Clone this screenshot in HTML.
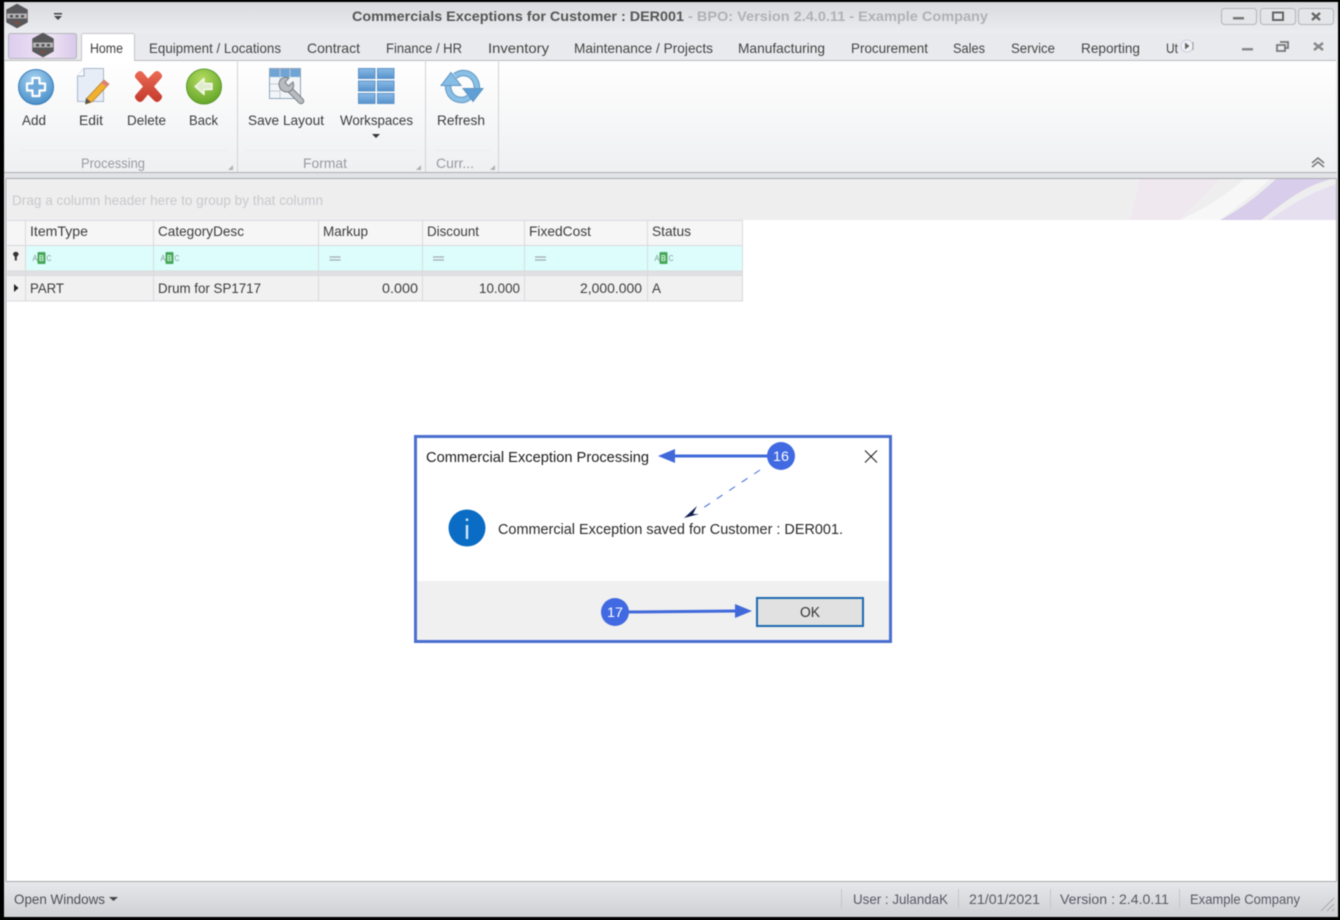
<!DOCTYPE html>
<html><head><meta charset="utf-8"><style>
html,body{margin:0;padding:0;background:#000;width:1340px;height:920px;overflow:hidden}
svg{display:block;filter:blur(.5px)}
text{font-family:"Liberation Sans",sans-serif;font-size:14px;fill:#444}
.g{fill:#9a9a9e}.h{fill:#3c3c3c}
.t{font-size:8px;fill:#7f9a94}.b{font-size:8px;fill:#d8f0dc;font-weight:bold}
</style></head><body>
<svg width="1340" height="920" viewBox="0 0 1340 920" xmlns="http://www.w3.org/2000/svg">
<defs>
<linearGradient id="tb" x1="0" y1="0" x2="0" y2="1"><stop offset="0" stop-color="#d9dadd"/><stop offset="1" stop-color="#ecedf0"/></linearGradient>
<linearGradient id="rb" x1="0" y1="0" x2="0" y2="1"><stop offset="0" stop-color="#fff"/><stop offset="1" stop-color="#eff0f2"/></linearGradient>
<linearGradient id="sb" x1="0" y1="0" x2="0" y2="1"><stop offset="0" stop-color="#e6e7ea"/><stop offset="1" stop-color="#cfd0d4"/></linearGradient>
<linearGradient id="app" x1="0" y1="0" x2="1" y2="0"><stop offset="0" stop-color="#dccdf0"/><stop offset=".6" stop-color="#efe4f4"/><stop offset="1" stop-color="#d8c8ea"/></linearGradient>
<radialGradient id="bl" cx=".45" cy=".3" r=".8"><stop offset="0" stop-color="#a8d4f2"/><stop offset="1" stop-color="#3d86c4"/></radialGradient>
<radialGradient id="gr" cx=".45" cy=".3" r=".8"><stop offset="0" stop-color="#b4dc60"/><stop offset="1" stop-color="#5a9e22"/></radialGradient>
<linearGradient id="rd" x1="0" y1="0" x2="0" y2="1"><stop offset="0" stop-color="#ea6a55"/><stop offset="1" stop-color="#c43a2c"/></linearGradient>
<linearGradient id="cell" x1="0" y1="0" x2="0" y2="1"><stop offset="0" stop-color="#8abae6"/><stop offset="1" stop-color="#5692cc"/></linearGradient>
<g id="abc"><rect x="6" y="0" width="8" height="12" rx="1" fill="#46a85a"/><text x="1" y="9" class="t" textLength="5" lengthAdjust="spacingAndGlyphs">A</text><text x="7.500" y="9" class="b" textLength="5" lengthAdjust="spacingAndGlyphs">B</text><text x="15" y="9" class="t" textLength="5" lengthAdjust="spacingAndGlyphs">C</text></g>
<g id="eq"><path d="M0 0h11M0 3h11" stroke="#a4acae" stroke-width="1.200"/></g>
<g id="hex"><path d="M0-11.500 10-6V6L0 11.500-10 6V-6Z" fill="#58585a" stroke="#58585a" stroke-width="1.500" stroke-linejoin="round"/><path d="M-10-2.500H10V2.500H-10Z" fill="#b4b4b6"/><path d="M-7-1h3v2.500h-3zM-1.500-1h3v2.500h-3zM4-1h3v2.500h-3z" fill="#555"/><path d="M-3 6h6l-3 3z" fill="#8c4a3c"/></g>
</defs>

<!-- window -->
<rect x="4" y="2" width="1334" height="915" fill="#e6e7ea"/>
<rect x="4" y="2" width="1334" height="31" fill="url(#tb)"/>
<rect x="4" y="33" width="1334" height="27" fill="#e9eaed"/>

<!-- qat -->
<use href="#hex" transform="translate(17,16)"/>
<path d="M54 13h8v1.500h-8zM54 16h8l-4 4z" fill="#444"/>

<!-- title -->
<text x="352" y="21" textLength="332" style="font-weight:bold;fill:#555" lengthAdjust="spacingAndGlyphs">Commercials Exceptions for Customer : DER001</text>
<text x="688" y="21" textLength="300" style="font-weight:bold;fill:#b0b1b4" lengthAdjust="spacingAndGlyphs">- BPO: Version 2.4.0.11 - Example Company</text>

<!-- window buttons -->
<g fill="#e4e5e8" stroke="#b4b5b9">
<rect x="1221.500" y="8.500" width="35" height="16" rx="3"/><rect x="1260.500" y="8.500" width="35" height="16" rx="3"/><rect x="1298.500" y="8.500" width="35" height="16" rx="3"/>
</g>
<rect x="1233" y="17" width="11" height="2.500" fill="#777"/>
<rect x="1273" y="12.500" width="10" height="7.500" fill="none" stroke="#666" stroke-width="2"/>
<path d="M1312 13l8 7M1320 13l-8 7" stroke="#666" stroke-width="2.400"/>

<!-- app button -->
<rect x="8.500" y="33.500" width="68" height="25" rx="2" fill="url(#app)" stroke="#b5b5bb"/>
<use href="#hex" transform="translate(43,45)"/>

<!-- ribbon -->
<rect x="5" y="60" width="1331" height="112" fill="url(#rb)" stroke="none"/>
<path d="M4.500 60.500H81M134 60.500H1336" stroke="#bcbdc1" fill="none"/>
<rect x="81.500" y="33.500" width="53" height="28" rx="2" fill="#fff" stroke="#c4c5c9"/>
<rect x="82" y="58" width="52" height="5" fill="#fff"/>

<!-- tabs -->
<text x="90" y="53" textLength="33" class="h" lengthAdjust="spacingAndGlyphs">Home</text>
<g style="fill:#555">
<text x="149" y="53" textLength="132" lengthAdjust="spacingAndGlyphs">Equipment / Locations</text>
<text x="307" y="53" textLength="53" lengthAdjust="spacingAndGlyphs">Contract</text>
<text x="386" y="53" textLength="76" lengthAdjust="spacingAndGlyphs">Finance / HR</text>
<text x="488" y="53" textLength="61" lengthAdjust="spacingAndGlyphs">Inventory</text>
<text x="574" y="53" textLength="139" lengthAdjust="spacingAndGlyphs">Maintenance / Projects</text>
<text x="738" y="53" textLength="87" lengthAdjust="spacingAndGlyphs">Manufacturing</text>
<text x="851" y="53" textLength="77" lengthAdjust="spacingAndGlyphs">Procurement</text>
<text x="953" y="53" textLength="32" lengthAdjust="spacingAndGlyphs">Sales</text>
<text x="1011" y="53" textLength="44" lengthAdjust="spacingAndGlyphs">Service</text>
<text x="1081" y="53" textLength="59" lengthAdjust="spacingAndGlyphs">Reporting</text>
<text x="1166" y="53" textLength="12" lengthAdjust="spacingAndGlyphs">Ut</text>
</g>
<circle cx="1187" cy="46" r="6" fill="#f1f2f6" stroke="#c9cce0"/>
<path d="M1185 42.500l4.500 3.500-4.500 3.500z" fill="#666"/>
<path d="M1193 42v8" stroke="#999"/>
<rect x="1242" y="48" width="11" height="2.500" fill="#888"/>
<path d="M1280 42h8v6h-3M1277 45h8v6h-8z" fill="none" stroke="#777" stroke-width="1.800"/>
<path d="M1314 43l9 7M1323 43l-9 7" stroke="#888" stroke-width="2.400"/>

<!-- ribbon separators -->
<path d="M237.500 60v112M425.500 60v112M498.500 60v112" stroke="#d2d3d6"/>
<path d="M20 150.500H228M246 150.500H416M434 150.500H490" stroke="#ececee"/>
<g fill="#b0b0b2"><path d="M233 165v5h-5zM421 165v5h-5zM495 165v5h-5z"/></g>

<!-- Add -->
<circle cx="36" cy="87" r="17.500" fill="url(#bl)" stroke="#3a7cb8"/>
<path d="M32.500 78h7v5.500H45v7h-5.500V96h-7v-5.500H27v-7h5.500z" fill="#6ea8da" stroke="#fff" stroke-width="2.200" stroke-linejoin="round"/>
<!-- Edit -->
<path d="M84 68.500h19.500v33h-26V76z" fill="#e6edf6" stroke="#a8b6cc"/>
<path d="M84 68.500V76h-7" fill="#fbfcfe" stroke="#a8b6cc"/>
<path d="M104 80l5 4-17 18-6 2 1-6z" fill="#f0b030" stroke="#b07820" stroke-width=".7"/>
<path d="M104 80l5 4-2.500 3-5-4z" fill="#e08080"/>
<path d="M85 104l1-6 5 4z" fill="#555"/>
<!-- Delete -->
<path d="M137 72.500c2-2 4-2 6 0l5 6 6-6c2-2 4-2 6 0s3 4 1 6l-7 8 7 8c2 2 1 4-1 6s-4 2-6 0l-6-6-5 6c-2 2-4 2-6 0s-3-4-1-6l7-8-7-8c-2-2-1-4 1-6z" fill="url(#rd)"/>
<!-- Back -->
<circle cx="204" cy="86.500" r="17.500" fill="url(#gr)" stroke="#5a9a28"/>
<path d="M195 86.500l9-8v5h8v6h-8v5z" fill="#dfeccb" stroke="#f7f7ef" stroke-width="1.400" stroke-linejoin="round"/>
<!-- labels -->
<text x="22" y="125" textLength="24" class="h" lengthAdjust="spacingAndGlyphs">Add</text>
<text x="79" y="125" textLength="24" class="h" lengthAdjust="spacingAndGlyphs">Edit</text>
<text x="127" y="125" textLength="39" class="h" lengthAdjust="spacingAndGlyphs">Delete</text>
<text x="189" y="125" textLength="29" class="h" lengthAdjust="spacingAndGlyphs">Back</text>
<text x="248" y="125" textLength="76" class="h" lengthAdjust="spacingAndGlyphs">Save Layout</text>
<text x="340" y="125" textLength="73" class="h" lengthAdjust="spacingAndGlyphs">Workspaces</text>
<text x="437" y="125" textLength="48" class="h" lengthAdjust="spacingAndGlyphs">Refresh</text>
<path d="M372 134h8l-4 4z" fill="#333"/>
<text x="81" y="168" textLength="64" class="g" lengthAdjust="spacingAndGlyphs">Processing</text>
<text x="303" y="168" textLength="44" class="g" lengthAdjust="spacingAndGlyphs">Format</text>
<text x="436" y="168" textLength="38" class="g" lengthAdjust="spacingAndGlyphs">Curr...</text>

<!-- Save layout icon -->
<rect x="269.500" y="68.500" width="31" height="30" fill="#f2f5f8" stroke="#8ea4ba"/>
<rect x="270" y="69" width="30" height="8" fill="#6fa4d4"/>
<path d="M280 69v29M290 69v8M270 84h12M270 91h10" stroke="#c0ccd8" fill="none"/>
<path d="M290 90l11 11" stroke="#777d84" stroke-width="6.500" stroke-linecap="round"/>
<path d="M290 90l11 11" stroke="#b8bcc0" stroke-width="4.500" stroke-linecap="round"/>
<path d="M279 84c0-5 5-8 10-6l-4 4.500 3.500 3.500 4.500-4c2 5-1 10-6 10-4 0-8-3-8-8z" fill="#b8bcc0" stroke="#777d84"/>
<!-- workspaces icon -->
<g fill="url(#cell)" stroke="#5f94c8" stroke-width="1">
<rect x="358.500" y="68.500" width="16.500" height="10"/><rect x="377.500" y="68.500" width="16.500" height="10"/>
<rect x="358.500" y="81" width="16.500" height="10"/><rect x="377.500" y="81" width="16.500" height="10"/>
<rect x="358.500" y="93.500" width="16.500" height="10"/><rect x="377.500" y="93.500" width="16.500" height="10"/>
</g>
<!-- refresh icon -->
<path d="M448 85c0 10 6 15 14 15 3 0 5-1 7-3" fill="none" stroke="#5f96c0" stroke-width="6.500"/>
<path d="M448 85c0 10 6 15 14 15 3 0 5-1 7-3" fill="none" stroke="#8ac0e6" stroke-width="4.500"/>
<path d="M477 89c0-10-6-16-14-16-3 0-5 1-8 3" fill="none" stroke="#5f96c0" stroke-width="6.500"/>
<path d="M477 89c0-10-6-16-14-16-3 0-5 1-8 3" fill="none" stroke="#8ac0e6" stroke-width="4.500"/>
<path d="M451 72.500l10 13h-20z" fill="#86bde6" stroke="#5f96c0"/>
<path d="M473 101.500l-10-13h20z" fill="#5f9fd6" stroke="#5f96c0"/>
<!-- collapse -->
<path d="M1312 163l6-5 6 5M1312 167l6-5 6 5" fill="none" stroke="#777" stroke-width="1.500"/>

<!-- content -->
<rect x="4" y="172" width="1334" height="6" fill="#e2e3e6"/>
<path d="M4 172.500H1337" stroke="#b0b1b5"/>
<rect x="6" y="178.500" width="1330.500" height="703" fill="#fff" stroke="#a8a9ad"/>
<rect x="7" y="179" width="1329" height="41" fill="#eeeeef"/>
<path d="M1140 179h80l-40 41h-50z" fill="#f0e6ef" opacity=".8"/>
<path d="M1180 220c30-14 50-28 64-41h26c-16 16-36 30-50 41z" fill="#f7f7f8"/>
<path d="M1220 220c20-10 40-26 56-41h55c-30 8-50 26-70 41z" fill="#d8cdea"/>
<path d="M1268 220c20-12 34-24 68-36v36z" fill="#e6dff0"/>
<text x="12" y="205" textLength="311" style="fill:#c8c9cb" lengthAdjust="spacingAndGlyphs">Drag a column header here to group by that column</text>

<!-- grid -->
<rect x="7" y="220" width="736" height="25" fill="#f6f6f7"/>
<rect x="7" y="245" width="736" height="26" fill="#dcfdfc"/>
<rect x="7" y="245" width="19" height="26" fill="#f2f2f3"/>
<rect x="7" y="271" width="736" height="4" fill="#e1e1e3"/>
<rect x="7" y="275" width="736" height="26" fill="#f1f1f2"/>
<rect x="7" y="275" width="19" height="26" fill="#f2f2f3"/>
<path d="M7 220.500H743M7 245.500H743M7 271H743M7 275.500H743M7 301H743" stroke="#d9dade" stroke-width="1"/>
<path d="M25.500 220v81M153.500 220v81M318.500 220v81M422.500 220v81M524.500 220v81M647.500 220v81M742.500 220v81" stroke="#d9dade"/>
<text x="30" y="236" textLength="58" lengthAdjust="spacingAndGlyphs" class="h">ItemType</text>
<text x="158" y="236" textLength="86" lengthAdjust="spacingAndGlyphs" class="h">CategoryDesc</text>
<text x="323" y="236" textLength="45" lengthAdjust="spacingAndGlyphs" class="h">Markup</text>
<text x="427" y="236" textLength="52" lengthAdjust="spacingAndGlyphs" class="h">Discount</text>
<text x="529" y="236" textLength="62" lengthAdjust="spacingAndGlyphs" class="h">FixedCost</text>
<text x="652" y="236" textLength="39" lengthAdjust="spacingAndGlyphs" class="h">Status</text>
<text x="30" y="293" textLength="34" lengthAdjust="spacingAndGlyphs" class="h">PART</text>
<text x="158" y="293" textLength="103" lengthAdjust="spacingAndGlyphs" class="h">Drum for SP1717</text>
<text x="382" y="293" textLength="36" lengthAdjust="spacingAndGlyphs" class="h">0.000</text>
<text x="479" y="293" textLength="41" lengthAdjust="spacingAndGlyphs" class="h">10.000</text>
<text x="580" y="293" textLength="62" lengthAdjust="spacingAndGlyphs" class="h">2,000.000</text>
<text x="652" y="293" textLength="9" lengthAdjust="spacingAndGlyphs" class="h">A</text>
<use href="#abc" transform="translate(31.500,252)"/>
<use href="#abc" transform="translate(159.500,252)"/>
<use href="#abc" transform="translate(653.500,252)"/>
<use href="#eq" transform="translate(329.500,257)"/>
<use href="#eq" transform="translate(433,257)"/>
<use href="#eq" transform="translate(535,257)"/>
<path d="M13 254.500a2.800 2.800 0 1 1 5.600 0l-1.800 2.500v3.500h-2v-3.500z" fill="#333"/>
<path d="M14 284l4.500 4-4.500 4z" fill="#222"/>

<!-- status bar -->
<rect x="4" y="882" width="1334" height="35" fill="url(#sb)"/>
<text x="14" y="904" textLength="91" lengthAdjust="spacingAndGlyphs" style="fill:#4c5058">Open Windows</text>
<path d="M109 897h9l-4.500 4z" fill="#444"/>
<path d="M841.500 889v20M958.500 889v20M1050.500 889v20M1179.500 889v20" stroke="#c5c6ca"/>
<text x="853" y="904" textLength="95" lengthAdjust="spacingAndGlyphs" style="fill:#555a64">User : JulandaK</text>
<text x="969" y="904" textLength="71" lengthAdjust="spacingAndGlyphs" style="fill:#555a64">21/01/2021</text>
<text x="1060" y="904" textLength="109" lengthAdjust="spacingAndGlyphs" style="fill:#555a64">Version : 2.4.0.11</text>
<text x="1190" y="904" textLength="110" lengthAdjust="spacingAndGlyphs" style="fill:#555a64">Example Company</text>
<path d="M1321 911l13-13M1327 911l7-7M1332 911l2-2" stroke="#aaa" fill="none"/>

<!-- dialog -->
<rect x="415.500" y="436.500" width="475" height="205" fill="#fff" stroke="#4a6fd0" stroke-width="3"/>
<rect x="417" y="581" width="472" height="59" fill="#f0f0f0"/>
<text x="426" y="462" textLength="223" lengthAdjust="spacingAndGlyphs" style="fill:#1c1c1c;font-size:15px">Commercial Exception Processing</text>
<path d="M865 450.500l12 12M877 450.500l-12 12" stroke="#222" stroke-width="1.100"/>
<circle cx="467" cy="528" r="18.500" fill="#0a6cc4"/>
<rect x="465.800" y="525" width="2.400" height="14" fill="#cfe8fa"/>
<rect x="465.800" y="518.500" width="2.400" height="2.500" fill="#cfe8fa"/>
<text x="498" y="534" textLength="345" lengthAdjust="spacingAndGlyphs" style="fill:#2a2a2a;font-size:15px">Commercial Exception saved for Customer : DER001.</text>
<rect x="757" y="598" width="106" height="28" fill="#e1e1e1" stroke="#1d6ab0" stroke-width="2"/>
<rect x="758.500" y="599.500" width="103" height="25" fill="none" stroke="#ddd" stroke-dasharray="1 1"/>
<text x="800" y="617" textLength="20" lengthAdjust="spacingAndGlyphs" style="fill:#333;font-size:15px">OK</text>

<!-- annotations -->
<path d="M672 456H768" stroke="#4169d9" stroke-width="3"/>
<path d="M658 456l17-7v14z" fill="#4169d9"/>
<circle cx="781" cy="456" r="14" fill="#4169e1"/>
<text x="773" y="461" textLength="16" lengthAdjust="spacingAndGlyphs" style="fill:#fff;font-size:13.500px">16</text>
<path d="M760 470L700 510" stroke="#4169d9" stroke-width="1" stroke-dasharray="7 8"/>
<path d="M684 518l13-12-4 8 6 0z" fill="#101c50"/>
<path d="M628 612L735 611" stroke="#4169d9" stroke-width="3"/>
<path d="M752 611l-17-7v14z" fill="#4169d9"/>
<circle cx="615" cy="612" r="14" fill="#4169e1"/>
<text x="607" y="617" textLength="16" lengthAdjust="spacingAndGlyphs" style="fill:#fff;font-size:13.500px">17</text>
</svg>
</body></html>
